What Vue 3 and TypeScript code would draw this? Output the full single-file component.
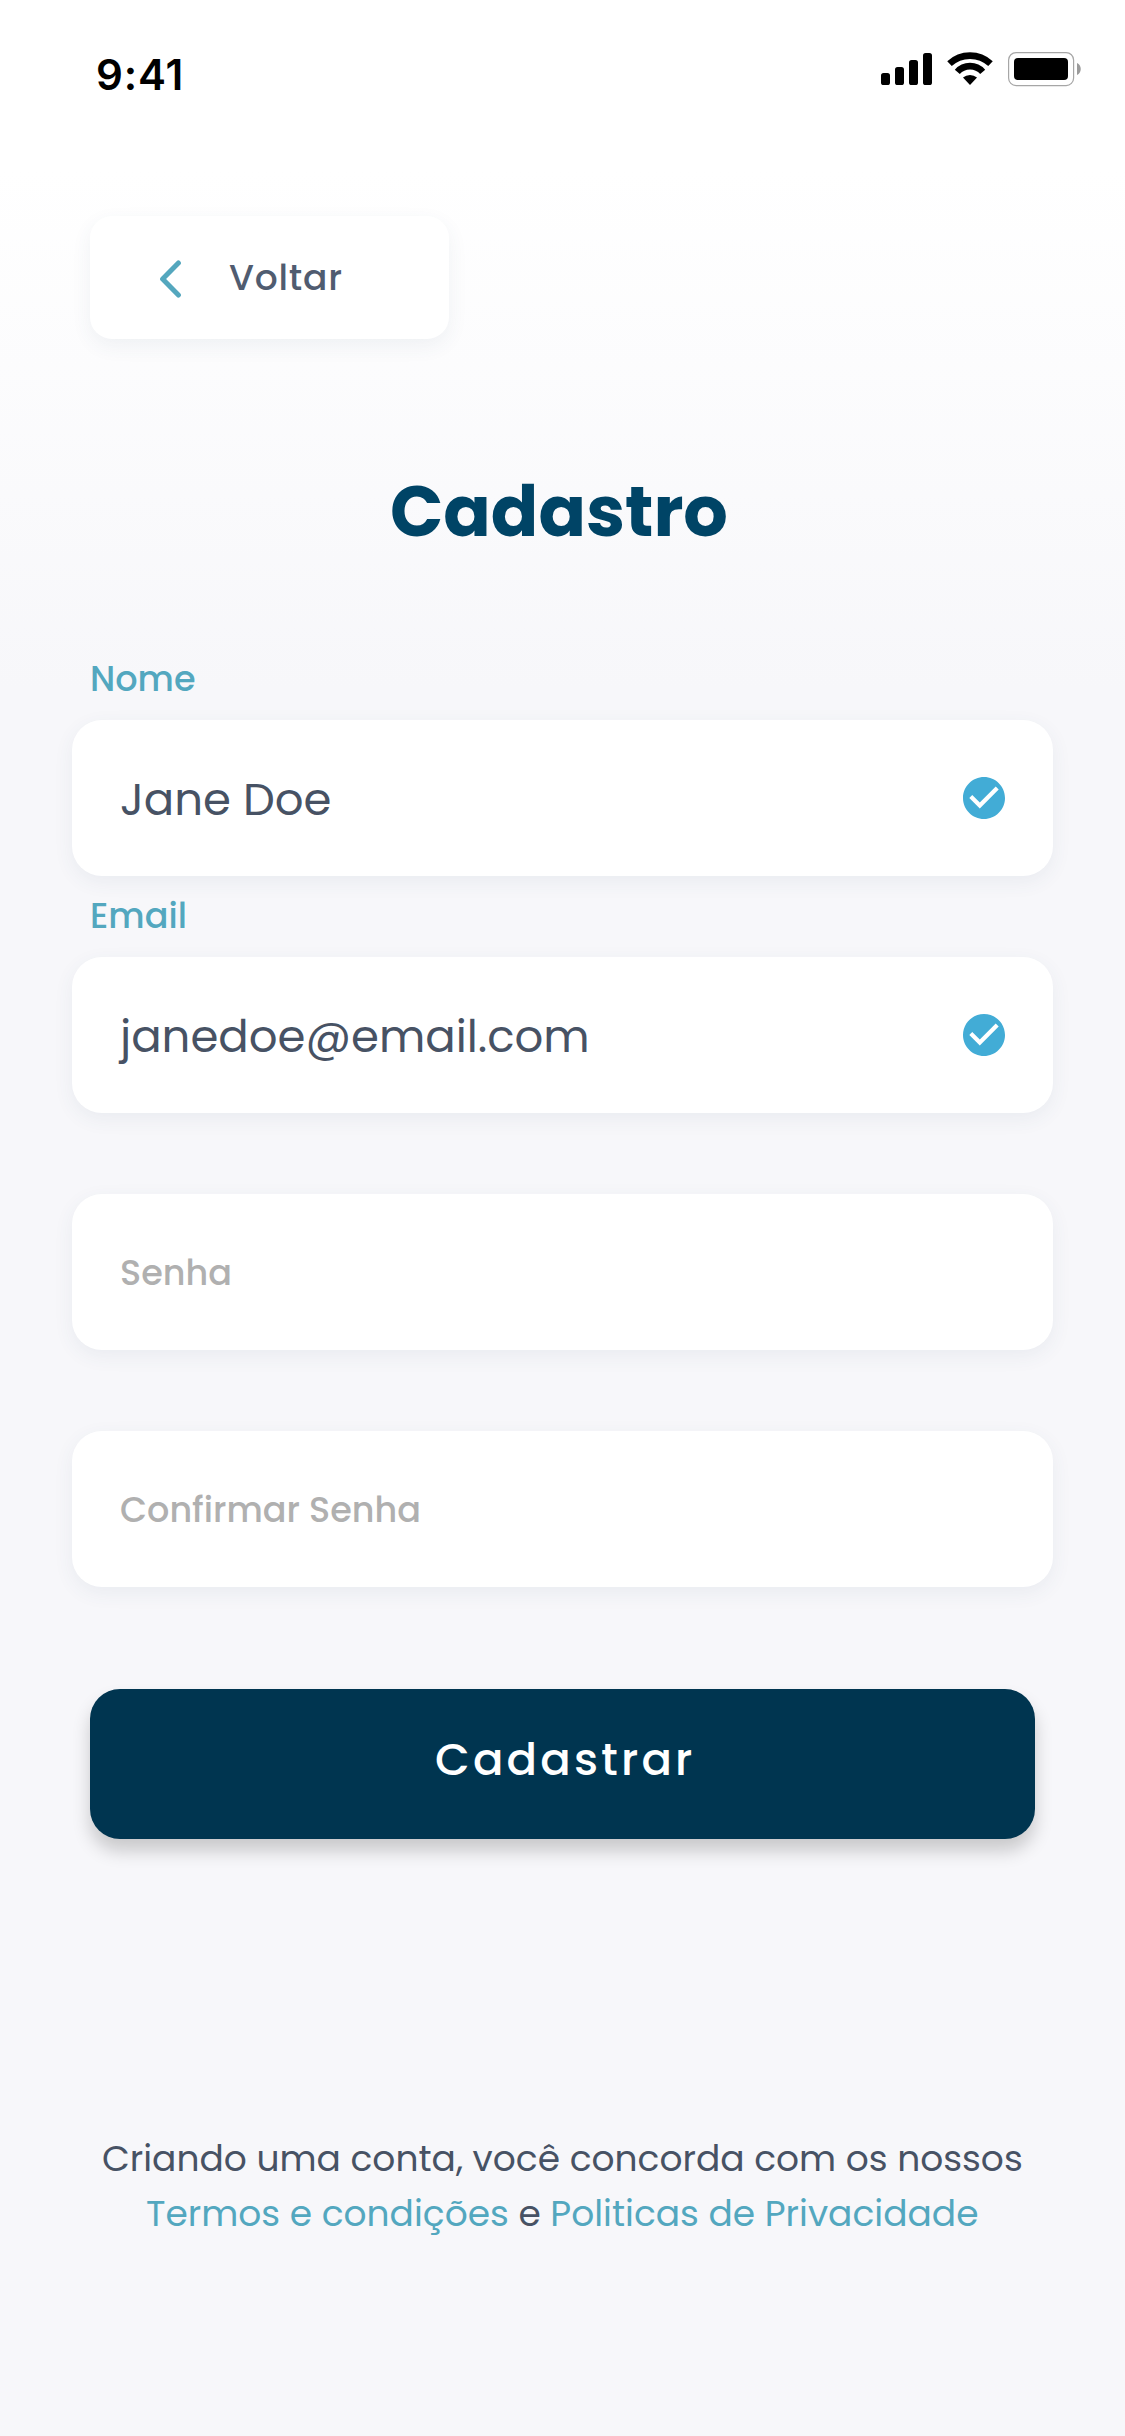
<script setup lang="ts">
interface Field {
  id: string
  label: string
  value: string
}

const fields: Field[] = [
  { id: 'nome', label: 'Nome', value: 'Jane Doe' },
  { id: 'email', label: 'Email', value: 'janedoe@email.com' },
  { id: 'senha', label: 'Senha', value: '' },
  { id: 'confirmar', label: 'Confirmar Senha', value: '' },
]
</script>

<template>
  <main class="screen">
    <header class="status">
      <span class="time">9:41</span>
      <svg class="indicators" width="201" height="36" viewBox="0 0 201 36">
        <rect x="0" y="22" width="9" height="12" rx="2.6" />
        <rect x="14" y="16" width="9" height="18" rx="2.6" />
        <rect x="28" y="9" width="9" height="25" rx="2.6" />
        <rect x="42" y="2" width="9" height="32" rx="2.6" />
        <g fill="none" stroke="#000" stroke-width="6.6">
          <path d="M68.5 12.7A30 30 0 0 1 109.5 12.7" />
          <path d="M76.3 20.9A16.8 16.8 0 0 1 101.7 20.9" />
        </g>
        <path d="M82 26.6A10.5 10.5 0 0 1 96 26.6L89 34Z" />
        <rect x="127.6" y="1.6" width="65" height="33" rx="7.5" fill="none" stroke="#a6a6a6" stroke-width="1.2" />
        <rect x="133" y="7" width="54" height="22" rx="4" />
        <path d="M196 12C201 14 201 22 196 24Z" fill="#9b9b9b" />
      </svg>
    </header>

    <button class="back" type="button">
      <svg width="24" height="40" viewBox="0 0 24 40">
        <path d="M20.4 5L4.6 21L20.4 37" fill="none" stroke="#54a7be" stroke-width="5" stroke-linecap="round" stroke-linejoin="round" />
      </svg>
      <span class="back-text">Voltar</span>
    </button>

    <h1 class="title"><span>Cadastro</span></h1>

    <form class="form" @submit.prevent>
      <div v-for="field in fields" :key="field.id" class="field">
        <div class="label-row">
          <span v-if="field.value" class="label">{{ field.label }}</span>
        </div>
        <div class="box">
          <span v-if="field.value" class="value">{{ field.value }}</span>
          <span v-else class="placeholder">{{ field.label }}</span>
          <svg v-if="field.value" class="check" width="42" height="42" viewBox="2 2 20 20">
            <path
              fill="#42acd6"
              d="M12 2C6.48 2 2 6.48 2 12s4.48 10 10 10 10-4.48 10-10S17.52 2 12 2zm-2 15l-5-5 1.41-1.41L10 14.17l7.59-7.59L19 8l-9 9z"
            />
          </svg>
        </div>
      </div>
      <button class="submit" type="submit"><span>Cadastrar</span></button>
    </form>

    <footer class="terms">
      <div class="line one">Criando uma conta, você concorda com os nossos</div>
      <div class="line two"><a>Termos e condições</a> e <a>Politicas de Privacidade</a></div>
    </footer>
  </main>
</template>

<style>
body {
  margin: 0;
}
</style>

<style scoped>
.screen {
  box-sizing: border-box;
  width: 1125px;
  height: 2436px;
  overflow: hidden;
  background: linear-gradient(to bottom, #ffffff 170px, #f7f7fa 690px);
  font-family: Poppins, Inter, 'Liberation Sans', sans-serif;
  color: #475264;
}

.status {
  display: flex;
  justify-content: space-between;
  height: 216px;
  padding: 51px 43px 0 96px;
  box-sizing: border-box;
}

.time {
  height: 48px;
  line-height: 48px;
  font-family: Inter, 'Liberation Sans', sans-serif;
  font-size: 42px;
  font-weight: 600;
  letter-spacing: 0.9px;
  color: #000;
}

.back {
  display: flex;
  align-items: center;
  width: 359px;
  height: 123px;
  margin: 0 0 0 90px;
  padding: 0 0 0 68px;
  border: 0;
  border-radius: 22px;
  background: #fff;
  box-shadow: 0 7px 20px rgba(60, 85, 110, 0.07);
  font: inherit;
  color: #505c70;
}

.back-text {
  margin-left: 47px;
  font-size: 36px;
  font-weight: 500;
  line-height: 50px;
  letter-spacing: 0.8px;
}

.title {
  display: flex;
  margin: 121px 0 0 390px;
  height: 104px;
  line-height: 104px;
  font-size: 70px;
  font-weight: 700;
  color: #004466;
}

.form {
  margin-top: 75px;
}

.field {
  width: 981px;
  margin-left: 72px;
}

.label-row {
  display: flex;
  height: 81px;
  padding: 20px 0 0 18px;
  box-sizing: border-box;
}

.label {
  height: 40px;
  line-height: 40px;
  font-size: 35px;
  font-weight: 500;
  color: #53a7bf;
}

.box {
  display: flex;
  align-items: center;
  justify-content: space-between;
  height: 156px;
  padding: 0 48px;
  box-sizing: border-box;
  border-radius: 30px;
  background: #fff;
  box-shadow: 0 6px 20px rgba(60, 80, 115, 0.07);
}

.value {
  padding-top: 3px;
  font-size: 45px;
  line-height: 60px;
}

.placeholder {
  padding-top: 1px;
  font-size: 35px;
  line-height: 50px;
  font-weight: 500;
  color: #b0b0b0;
}

.submit {
  display: flex;
  width: 945px;
  height: 150px;
  margin: 102px 0 0 90px;
  padding: 31px 0 0 345px;
  border: 0;
  border-radius: 30px;
  background: #003550;
  box-shadow: 0 12px 18px rgba(0, 0, 0, 0.19);
  font: inherit;
  font-size: 45px;
  font-weight: 500;
  line-height: 80px;
  letter-spacing: 3.15px;
  color: #fff;
}

.terms {
  margin-top: 292px;
  font-size: 36px;
  line-height: 55px;
}

.line {
  white-space: nowrap;
}

.one {
  padding-left: 102px;
}

.two {
  padding-left: 146px;
}

.terms a {
  color: #53a7bf;
}
</style>
